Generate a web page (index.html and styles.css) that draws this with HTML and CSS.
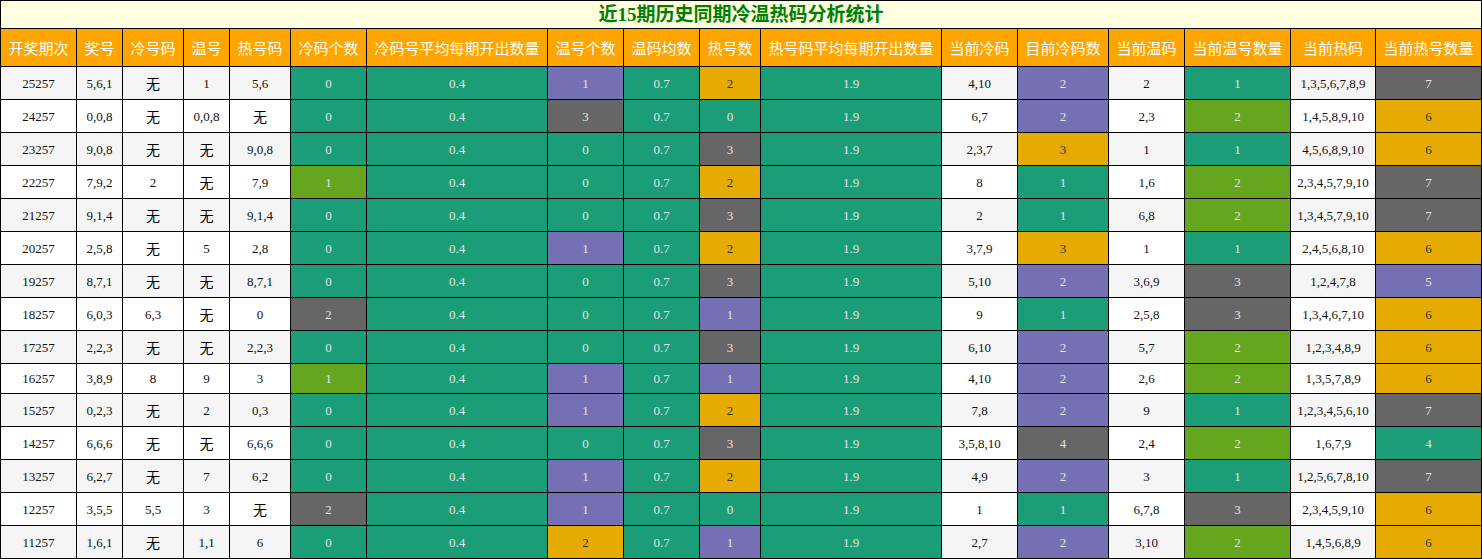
FILE: index.html
```html
<!DOCTYPE html>
<html lang="zh">
<head>
<meta charset="utf-8">
<title>近15期历史同期冷温热码分析统计</title>
<link rel="stylesheet" href="styles.css">
</head>
<body>
<table class="stats">
<colgroup>
<col class="w76"><col class="w46"><col class="w61"><col class="w46"><col class="w61"><col class="w76"><col class="w181"><col class="w76"><col class="w76"><col class="w61"><col class="w181"><col class="w76"><col class="w91"><col class="w76"><col class="w106"><col class="w85"><col class="w106">
</colgroup>
<thead>
<tr class="title-row"><th colspan="17" class="title">近15期历史同期冷温热码分析统计</th></tr>
<tr class="head-row">
<th>开奖期次</th><th>奖号</th><th>冷号码</th><th>温号</th><th>热号码</th><th>冷码个数</th><th>冷码号平均每期开出数量</th><th>温号个数</th><th>温码均数</th><th>热号数</th><th>热号码平均每期开出数量</th><th>当前冷码</th><th>目前冷码数</th><th>当前温码</th><th>当前温号数量</th><th>当前热码</th><th>当前热号数量</th>
</tr>
</thead>
<tbody>
<tr><td>25257</td><td>5,6,1</td><td><span class="none">无</span></td><td>1</td><td>5,6</td><td class="g">0</td><td class="g">0.4</td><td class="p">1</td><td class="g">0.7</td><td class="y">2</td><td class="g">1.9</td><td>4,10</td><td class="p">2</td><td>2</td><td class="g">1</td><td>1,3,5,6,7,8,9</td><td class="k">7</td></tr>
<tr><td>24257</td><td>0,0,8</td><td><span class="none">无</span></td><td>0,0,8</td><td><span class="none">无</span></td><td class="g">0</td><td class="g">0.4</td><td class="k">3</td><td class="g">0.7</td><td class="g">0</td><td class="g">1.9</td><td>6,7</td><td class="p">2</td><td>2,3</td><td class="l">2</td><td>1,4,5,8,9,10</td><td class="y">6</td></tr>
<tr><td>23257</td><td>9,0,8</td><td><span class="none">无</span></td><td><span class="none">无</span></td><td>9,0,8</td><td class="g">0</td><td class="g">0.4</td><td class="g">0</td><td class="g">0.7</td><td class="k">3</td><td class="g">1.9</td><td>2,3,7</td><td class="y">3</td><td>1</td><td class="g">1</td><td>4,5,6,8,9,10</td><td class="y">6</td></tr>
<tr><td>22257</td><td>7,9,2</td><td>2</td><td><span class="none">无</span></td><td>7,9</td><td class="l">1</td><td class="g">0.4</td><td class="g">0</td><td class="g">0.7</td><td class="y">2</td><td class="g">1.9</td><td>8</td><td class="g">1</td><td>1,6</td><td class="l">2</td><td>2,3,4,5,7,9,10</td><td class="k">7</td></tr>
<tr><td>21257</td><td>9,1,4</td><td><span class="none">无</span></td><td><span class="none">无</span></td><td>9,1,4</td><td class="g">0</td><td class="g">0.4</td><td class="g">0</td><td class="g">0.7</td><td class="k">3</td><td class="g">1.9</td><td>2</td><td class="g">1</td><td>6,8</td><td class="l">2</td><td>1,3,4,5,7,9,10</td><td class="k">7</td></tr>
<tr><td>20257</td><td>2,5,8</td><td><span class="none">无</span></td><td>5</td><td>2,8</td><td class="g">0</td><td class="g">0.4</td><td class="p">1</td><td class="g">0.7</td><td class="y">2</td><td class="g">1.9</td><td>3,7,9</td><td class="y">3</td><td>1</td><td class="g">1</td><td>2,4,5,6,8,10</td><td class="y">6</td></tr>
<tr><td>19257</td><td>8,7,1</td><td><span class="none">无</span></td><td><span class="none">无</span></td><td>8,7,1</td><td class="g">0</td><td class="g">0.4</td><td class="g">0</td><td class="g">0.7</td><td class="k">3</td><td class="g">1.9</td><td>5,10</td><td class="p">2</td><td>3,6,9</td><td class="k">3</td><td>1,2,4,7,8</td><td class="p">5</td></tr>
<tr><td>18257</td><td>6,0,3</td><td>6,3</td><td><span class="none">无</span></td><td>0</td><td class="k">2</td><td class="g">0.4</td><td class="g">0</td><td class="g">0.7</td><td class="p">1</td><td class="g">1.9</td><td>9</td><td class="g">1</td><td>2,5,8</td><td class="k">3</td><td>1,3,4,6,7,10</td><td class="y">6</td></tr>
<tr><td>17257</td><td>2,2,3</td><td><span class="none">无</span></td><td><span class="none">无</span></td><td>2,2,3</td><td class="g">0</td><td class="g">0.4</td><td class="g">0</td><td class="g">0.7</td><td class="k">3</td><td class="g">1.9</td><td>6,10</td><td class="p">2</td><td>5,7</td><td class="l">2</td><td>1,2,3,4,8,9</td><td class="y">6</td></tr>
<tr><td>16257</td><td>3,8,9</td><td>8</td><td>9</td><td>3</td><td class="l">1</td><td class="g">0.4</td><td class="p">1</td><td class="g">0.7</td><td class="p">1</td><td class="g">1.9</td><td>4,10</td><td class="p">2</td><td>2,6</td><td class="l">2</td><td>1,3,5,7,8,9</td><td class="y">6</td></tr>
<tr><td>15257</td><td>0,2,3</td><td><span class="none">无</span></td><td>2</td><td>0,3</td><td class="g">0</td><td class="g">0.4</td><td class="p">1</td><td class="g">0.7</td><td class="y">2</td><td class="g">1.9</td><td>7,8</td><td class="p">2</td><td>9</td><td class="g">1</td><td>1,2,3,4,5,6,10</td><td class="k">7</td></tr>
<tr><td>14257</td><td>6,6,6</td><td><span class="none">无</span></td><td><span class="none">无</span></td><td>6,6,6</td><td class="g">0</td><td class="g">0.4</td><td class="g">0</td><td class="g">0.7</td><td class="k">3</td><td class="g">1.9</td><td>3,5,8,10</td><td class="k">4</td><td>2,4</td><td class="l">2</td><td>1,6,7,9</td><td class="g">4</td></tr>
<tr><td>13257</td><td>6,2,7</td><td><span class="none">无</span></td><td>7</td><td>6,2</td><td class="g">0</td><td class="g">0.4</td><td class="p">1</td><td class="g">0.7</td><td class="y">2</td><td class="g">1.9</td><td>4,9</td><td class="p">2</td><td>3</td><td class="g">1</td><td>1,2,5,6,7,8,10</td><td class="k">7</td></tr>
<tr><td>12257</td><td>3,5,5</td><td>5,5</td><td>3</td><td><span class="none">无</span></td><td class="k">2</td><td class="g">0.4</td><td class="p">1</td><td class="g">0.7</td><td class="g">0</td><td class="g">1.9</td><td>1</td><td class="g">1</td><td>6,7,8</td><td class="k">3</td><td>2,3,4,5,9,10</td><td class="y">6</td></tr>
<tr><td>11257</td><td>1,6,1</td><td><span class="none">无</span></td><td>1,1</td><td>6</td><td class="g">0</td><td class="g">0.4</td><td class="y">2</td><td class="g">0.7</td><td class="p">1</td><td class="g">1.9</td><td>2,7</td><td class="p">2</td><td>3,10</td><td class="l">2</td><td>1,4,5,6,8,9</td><td class="y">6</td></tr>
</tbody>
</table>
</body>
</html>
```

FILE: styles.css
```css
html, body {
  margin: 0;
  padding: 0;
  background: #ffffff;
}

.stats {
  border-collapse: collapse;
  table-layout: fixed;
  width: 1482px;
  font-family: "Liberation Serif", "Noto Sans CJK SC", serif;
  font-size: 13px;
  color: #111111;
}

.w46 { width: 46px; }
.w61 { width: 61px; }
.w76 { width: 76px; }
.w85 { width: 85px; }
.w91 { width: 91px; }
.w106 { width: 106px; }
.w181 { width: 181px; }

.stats th,
.stats td {
  border: 1px solid #000000;
  text-align: center;
  padding: 0;
  white-space: nowrap;
  overflow: hidden;
}

.title {
  background: #ffffe0;
  color: #008000;
  font-family: "Liberation Serif", "Noto Sans CJK SC", serif;
  font-weight: bold;
  font-size: 19px;
  line-height: 27px;
  height: 27px;
}

.head-row th {
  background: #ffa500;
  color: #ffffff;
  font-family: "Noto Sans CJK SC", sans-serif;
  font-weight: normal;
  font-size: 15px;
  line-height: 21px;
  padding: 8px 0;
}

.stats td {
  padding: 7px 0;
  line-height: 15px;
}

.stats tbody tr:nth-child(odd) {
  background: #f5f5f5;
}

.stats tbody tr:nth-child(even) {
  background: #ffffff;
}

.none {
  font-family: "Noto Sans CJK SC", sans-serif;
  font-size: 14px;
  line-height: 18px;
  color: #000000;
}

.stats td.g { background: #1b9e77; color: #e4e4e4; }
.stats td.p { background: #7570b3; color: #e4e4e4; }
.stats td.k { background: #666666; color: #e4e4e4; }
.stats td.l { background: #66a61e; color: #e4e4e4; }
.stats td.y { background: #e6ab02; color: #333333; }
```
